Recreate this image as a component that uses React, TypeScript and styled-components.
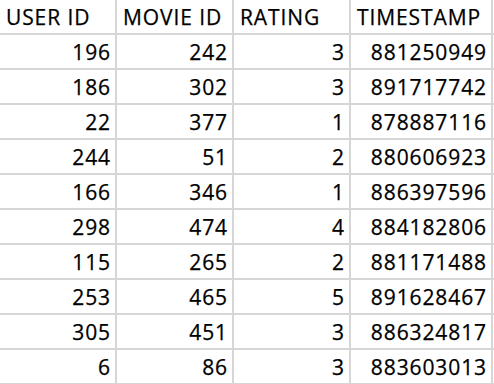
import React from 'react';
import styled, { createGlobalStyle } from 'styled-components';

const GlobalStyle = createGlobalStyle`
  html, body {
    margin: 0;
    padding: 0;
    background: #ffffff;
  }
  body {
    font-family: 'Open Sans', 'Liberation Sans', sans-serif;
  }
`;

const Sheet = styled.div`
  display: grid;
  grid-template-columns: 115px 115px 115px 140px 1fr;
  grid-auto-rows: 33px;
  gap: 2px;
  background: #d6d6d6;
  width: 494px;
  height: 384px;
  overflow: hidden;
`;

const Cell = styled.div<{ $header?: boolean }>`
  background: #ffffff;
  color: #000000;
  font-size: 21px;
  letter-spacing: 0.9px;
  line-height: 1;
  -webkit-text-stroke: 0.25px #000000;
  display: flex;
  align-items: flex-end;
  justify-content: ${(p) => (p.$header ? 'flex-start' : 'flex-end')};
  padding: ${(p) => (p.$header ? '0 0 5px 6px' : '0 4px 5px 0')};
  white-space: nowrap;
  overflow: hidden;
`;

const Spare = styled.div`
  background: #ffffff;
`;

const headers = ['USER ID', 'MOVIE ID', 'RATING', 'TIMESTAMP'];

const rows: [number, number, number, number][] = [
  [196, 242, 3, 881250949],
  [186, 302, 3, 891717742],
  [22, 377, 1, 878887116],
  [244, 51, 2, 880606923],
  [166, 346, 1, 886397596],
  [298, 474, 4, 884182806],
  [115, 265, 2, 881171488],
  [253, 465, 5, 891628467],
  [305, 451, 3, 886324817],
  [6, 86, 3, 883603013],
];

const App: React.FC = () => {
  return (
    <React.Fragment>
      <GlobalStyle />
      <Sheet>
        {headers.map((h) => (
          <Cell key={h} $header>
            {h}
          </Cell>
        ))}
        <Spare />
        {rows.map((r, i) => (
          <React.Fragment key={i}>
            {r.map((v, j) => (
              <Cell key={j}>{v}</Cell>
            ))}
            <Spare />
          </React.Fragment>
        ))}
      </Sheet>
    </React.Fragment>
  );
};

export default App;
